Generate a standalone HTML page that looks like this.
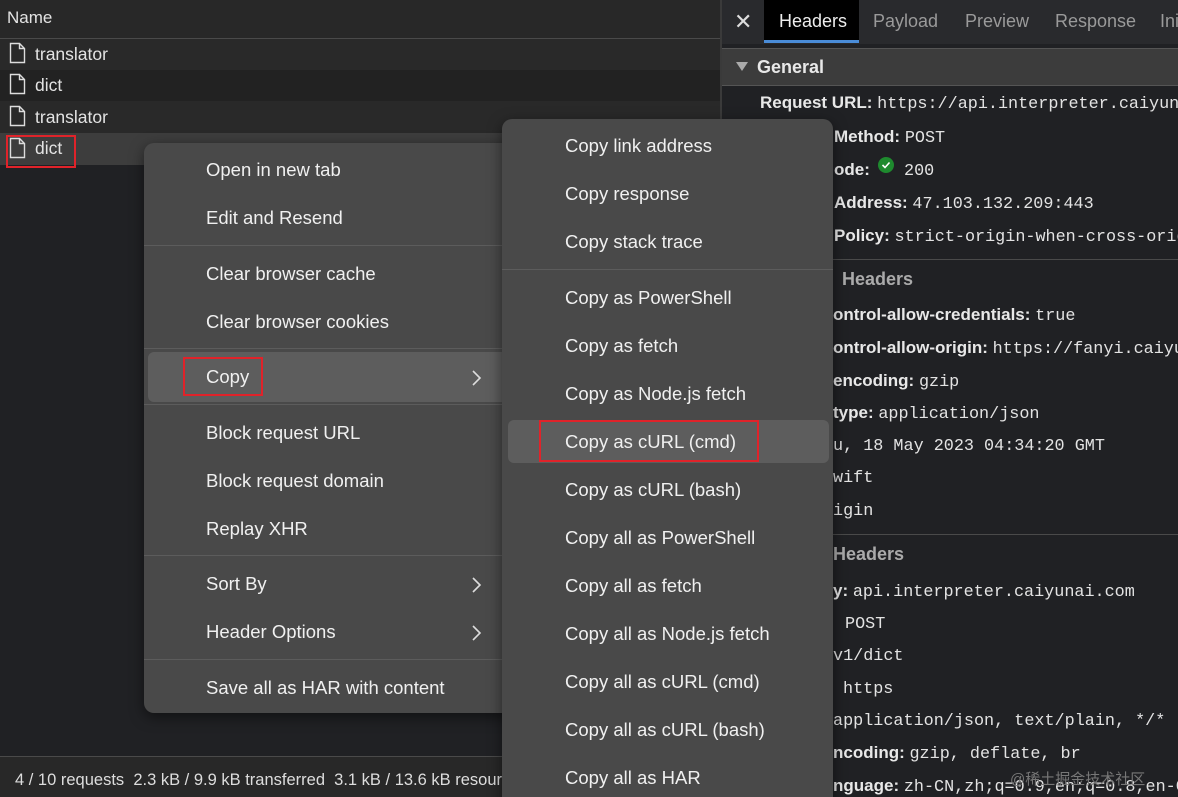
<!DOCTYPE html>
<html><head><meta charset="utf-8"><style>
*{margin:0;padding:0;box-sizing:border-box}
html,body{width:1178px;height:797px;overflow:hidden}
body{background:#202124;font-family:"Liberation Sans",sans-serif;color:#e3e3e3;position:relative}
#w{position:absolute;left:0;top:0;width:1178px;height:797px;overflow:hidden}
.a{position:absolute;white-space:nowrap}
.m{font-family:"Liberation Mono",monospace;font-size:16.8px;color:#e3e3e3}
.b{font-weight:bold;font-size:17px;color:#e8e8e8}
.mi{position:absolute;font-size:18.5px;color:#f0f0f0;white-space:nowrap}
.sep{position:absolute;height:1px;background:#5c5c5c}
.file{position:absolute;left:9px;width:17px;height:22px}
</style></head><body><div id="w">
<div class="a" style="left:0;top:0;width:720px;height:38px;background:#282828"></div>
<div class="a" style="left:7px;top:8px;font-size:17px">Name</div>
<div class="a" style="left:0;top:38px;width:720px;height:1px;background:#4a4a4a"></div>
<div class="a" style="left:0;top:39px;width:720px;height:31px;background:#292929"></div>
<div class="a" style="left:0;top:70px;width:720px;height:31px;background:#222222"></div>
<div class="a" style="left:0;top:101px;width:720px;height:32px;background:#292929"></div>
<div class="a" style="left:0;top:133px;width:720px;height:32px;background:#3d3d3d"></div>
<svg class="file" style="top:42px" viewBox="0 0 17 22"><path d="M1.5 1.5h9l5 5v14h-14z M10.5 1.5v5h5" fill="none" stroke="#ddd" stroke-width="1.4"/></svg>
<svg class="file" style="top:73px" viewBox="0 0 17 22"><path d="M1.5 1.5h9l5 5v14h-14z M10.5 1.5v5h5" fill="none" stroke="#ddd" stroke-width="1.4"/></svg>
<svg class="file" style="top:105px" viewBox="0 0 17 22"><path d="M1.5 1.5h9l5 5v14h-14z M10.5 1.5v5h5" fill="none" stroke="#ddd" stroke-width="1.4"/></svg>
<svg class="file" style="top:137px" viewBox="0 0 17 22"><path d="M1.5 1.5h9l5 5v14h-14z M10.5 1.5v5h5" fill="none" stroke="#ddd" stroke-width="1.4"/></svg>
<div class="a" style="left:35px;top:44px;font-size:17.5px">translator</div>
<div class="a" style="left:35px;top:75px;font-size:17.5px">dict</div>
<div class="a" style="left:35px;top:107px;font-size:17.5px">translator</div>
<div class="a" style="left:35px;top:138px;font-size:17.5px">dict</div>
<div class="a" style="left:6px;top:135px;width:70px;height:33px;border:2px solid #e0232a"></div>
<div class="a" style="left:0;top:756px;width:720px;height:1px;background:#4a4a4a"></div>
<div class="a" style="left:0;top:757px;width:720px;height:40px;background:#282828"></div>
<div class="a" style="left:15px;top:771px;font-size:16.5px;color:#ddd">4 / 10 requests &nbsp;2.3 kB / 9.9 kB transferred &nbsp;3.1 kB / 13.6 kB resources</div>
<div class="a" style="left:720px;top:0;width:2px;height:797px;background:#3a3a3a"></div>
<div class="a" style="left:722px;top:0;width:456px;height:44px;background:#292a2d"></div>
<div class="a" style="left:734px;top:9px;font-size:22px;color:#ddd">✕</div>
<div class="a" style="left:764px;top:0;width:95px;height:43px;background:#000"></div>
<div class="a" style="left:764px;top:40px;width:95px;height:3px;background:#4a8cd8"></div>
<div class="a" style="left:779px;top:11px;font-size:18px;color:#eee">Headers</div>
<div class="a" style="left:873px;top:11px;font-size:18px;color:#9a9a9a">Payload</div>
<div class="a" style="left:965px;top:11px;font-size:18px;color:#9a9a9a">Preview</div>
<div class="a" style="left:1055px;top:11px;font-size:18px;color:#9a9a9a">Response</div>
<div class="a" style="left:1160px;top:11px;font-size:18px;color:#9a9a9a">Ini</div>
<div class="a" style="left:722px;top:48px;width:456px;height:38px;background:#3c3c3c;border-top:1px solid #555;border-bottom:1px solid #555"></div>
<svg class="a" style="left:736px;top:62px" width="12" height="10"><path d="M0 0h12L6 9z" fill="#aaa"/></svg>
<div class="a b" style="left:757px;top:57px;font-size:18px">General</div>
<div class="a" style="left:760px;top:93px"><span class="b">Request URL: </span><span class="m">https://api.interpreter.caiyunai.com/v1/dict</span></div>
<div class="a" style="left:834px;top:127px"><span class="b">Method: </span><span class="m">POST</span></div>
<div class="a" style="left:834px;top:160px"><span class="b">ode: </span></div>
<div class="a" style="left:878px;top:157px;width:16px;height:16px;border-radius:8px;background:#1e8a2e"></div>
<svg class="a" style="left:878px;top:157px" width="16" height="16"><path d="M4.5 8l2.5 2.5 4.5-5" fill="none" stroke="#fff" stroke-width="1.6"/></svg>
<div class="a m" style="left:904px;top:162px">200</div>
<div class="a" style="left:834px;top:193px"><span class="b">Address: </span><span class="m">47.103.132.209:443</span></div>
<div class="a" style="left:834px;top:226px"><span class="b">Policy: </span><span class="m">strict-origin-when-cross-origin</span></div>
<div class="a" style="left:833px;top:259px;width:345px;height:1px;background:#4a4a4a"></div>
<div class="a b" style="left:842px;top:269px;color:#aaa;font-size:18px">Headers</div>
<div class="a" style="left:833px;top:305px"><span class="b">ontrol-allow-credentials: </span><span class="m">true</span></div>
<div class="a" style="left:833px;top:338px"><span class="b">ontrol-allow-origin: </span><span class="m">https://fanyi.caiyunai.com</span></div>
<div class="a" style="left:833px;top:371px"><span class="b">encoding: </span><span class="m">gzip</span></div>
<div class="a" style="left:833px;top:403px"><span class="b">type: </span><span class="m">application/json</span></div>
<div class="a m" style="left:833px;top:437px">u, 18 May 2023 04:34:20 GMT</div>
<div class="a m" style="left:833px;top:469px">wift</div>
<div class="a m" style="left:833px;top:502px">igin</div>
<div class="a" style="left:833px;top:534px;width:345px;height:1px;background:#4a4a4a"></div>
<div class="a b" style="left:833px;top:544px;color:#aaa;font-size:18px">Headers</div>
<div class="a" style="left:833px;top:581px"><span class="b">y: </span><span class="m">api.interpreter.caiyunai.com</span></div>
<div class="a m" style="left:845px;top:615px">POST</div>
<div class="a m" style="left:833px;top:647px">v1/dict</div>
<div class="a m" style="left:843px;top:680px">https</div>
<div class="a m" style="left:833px;top:712px">application/json, text/plain, */*</div>
<div class="a" style="left:833px;top:743px"><span class="b">ncoding: </span><span class="m">gzip, deflate, br</span></div>
<div class="a" style="left:833px;top:776px"><span class="b">nguage: </span><span class="m">zh-CN,zh;q=0.9,en;q=0.8,en-GB</span></div>
<div class="a" style="left:1010px;top:768px;font-size:15px;color:#777;font-family:'Liberation Sans','Noto Sans CJK SC',sans-serif">@稀土掘金技术社区</div>
<div class="a" style="left:144px;top:143px;width:370px;height:570px;background:#494949;border-radius:10px;box-shadow:0 4px 14px rgba(0,0,0,.5)"></div>
<div class="mi" style="left:206px;top:159px">Open in new tab</div>
<div class="mi" style="left:206px;top:207px">Edit and Resend</div>
<div class="sep" style="left:144px;top:245px;width:360px"></div>
<div class="mi" style="left:206px;top:263px">Clear browser cache</div>
<div class="mi" style="left:206px;top:311px">Clear browser cookies</div>
<div class="sep" style="left:144px;top:348px;width:360px"></div>
<div class="a" style="left:148px;top:352px;width:360px;height:50px;background:#5d5d5d;border-radius:6px"></div>
<div class="mi" style="left:206px;top:366px">Copy</div>
<div class="a" style="left:183px;top:357px;width:80px;height:39px;border:2px solid #e0232a"></div>
<svg class="a" style="left:471px;top:369px" width="12" height="18"><path d="M2 2l7 7-7 7" fill="none" stroke="#ddd" stroke-width="1.6"/></svg>
<div class="sep" style="left:144px;top:404px;width:360px"></div>
<div class="mi" style="left:206px;top:422px">Block request URL</div>
<div class="mi" style="left:206px;top:470px">Block request domain</div>
<div class="mi" style="left:206px;top:518px">Replay XHR</div>
<div class="sep" style="left:144px;top:555px;width:360px"></div>
<div class="mi" style="left:206px;top:573px">Sort By</div>
<svg class="a" style="left:471px;top:576px" width="12" height="18"><path d="M2 2l7 7-7 7" fill="none" stroke="#ddd" stroke-width="1.6"/></svg>
<div class="mi" style="left:206px;top:621px">Header Options</div>
<svg class="a" style="left:471px;top:624px" width="12" height="18"><path d="M2 2l7 7-7 7" fill="none" stroke="#ddd" stroke-width="1.6"/></svg>
<div class="sep" style="left:144px;top:659px;width:360px"></div>
<div class="mi" style="left:206px;top:677px">Save all as HAR with content</div>
<div class="a" style="left:502px;top:119px;width:331px;height:700px;background:#494949;border-radius:10px;box-shadow:0 4px 14px rgba(0,0,0,.5)"></div>
<div class="mi" style="left:565px;top:135px">Copy link address</div>
<div class="mi" style="left:565px;top:183px">Copy response</div>
<div class="mi" style="left:565px;top:231px">Copy stack trace</div>
<div class="sep" style="left:502px;top:269px;width:331px"></div>
<div class="mi" style="left:565px;top:287px">Copy as PowerShell</div>
<div class="mi" style="left:565px;top:335px">Copy as fetch</div>
<div class="mi" style="left:565px;top:383px">Copy as Node.js fetch</div>
<div class="a" style="left:508px;top:420px;width:321px;height:43px;background:#5d5d5d;border-radius:6px"></div>
<div class="mi" style="left:565px;top:431px">Copy as cURL (cmd)</div>
<div class="a" style="left:539px;top:420px;width:220px;height:42px;border:2px solid #e0232a"></div>
<div class="mi" style="left:565px;top:479px">Copy as cURL (bash)</div>
<div class="mi" style="left:565px;top:527px">Copy all as PowerShell</div>
<div class="mi" style="left:565px;top:575px">Copy all as fetch</div>
<div class="mi" style="left:565px;top:623px">Copy all as Node.js fetch</div>
<div class="mi" style="left:565px;top:671px">Copy all as cURL (cmd)</div>
<div class="mi" style="left:565px;top:719px">Copy all as cURL (bash)</div>
<div class="mi" style="left:565px;top:767px">Copy all as HAR</div>
</div></body></html>
